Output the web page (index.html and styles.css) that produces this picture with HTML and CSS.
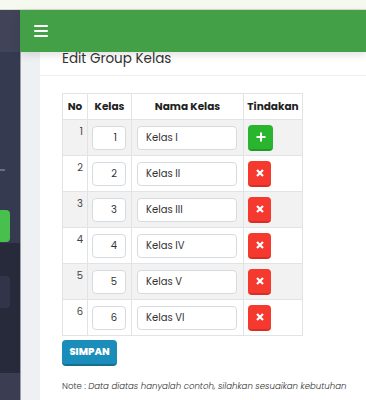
FILE: index.html
```html
<!DOCTYPE html>
<html lang="id">
<head>
    <meta charset="UTF-8">
    <meta name="viewport" content="width=device-width, initial-scale=1.0">
    <title>Edit Group Kelas</title>
    <link rel="stylesheet" href="styles.css">
</head>
<body>
    <div class="top-strip"></div>
    <div class="layout">
        <aside class="sidebar">
            <div class="sidebar-head"></div>
            <div class="sidebar-menu">
                <div class="menu-line"></div>
                <div class="menu-active"></div>
            </div>
            <div class="sidebar-sub">
                <div class="sub-item"></div>
            </div>
            <div class="sidebar-foot"></div>
        </aside>

        <main class="main">
            <header class="navbar">
                <span class="burger">
                    <svg width="14" height="12" viewBox="0 0 14 12">
                        <rect x="0" y="0" width="14" height="2" rx="1" fill="#fff"/>
                        <rect x="0" y="5" width="14" height="2" rx="1" fill="#fff"/>
                        <rect x="0" y="10" width="14" height="2" rx="1" fill="#fff"/>
                    </svg>
                </span>
            </header>

            <div class="content">
                <div class="card">
                    <div class="card-header">Edit Group Kelas</div>
                    <div class="card-body">
                        <table class="kelas-table">
                            <thead>
                                <tr>
                                    <th class="col-no">No</th>
                                    <th class="col-kelas">Kelas</th>
                                    <th class="col-nama">Nama Kelas</th>
                                    <th class="col-aksi">Tindakan</th>
                                </tr>
                            </thead>
                            <tbody>
                                <tr>
                                    <td class="no">1</td>
                                    <td><input class="input-kelas" type="text" value="1"></td>
                                    <td><input class="input-nama" type="text" value="Kelas I"></td>
                                    <td>
                                        <button class="btn btn-add">
                                            <svg width="10" height="10" viewBox="0 0 10 10"><path d="M5 0.5v9M0.5 5h9" stroke="#fff" stroke-width="2"/></svg>
                                        </button>
                                    </td>
                                </tr>
                                <tr>
                                    <td class="no">2</td>
                                    <td><input class="input-kelas" type="text" value="2"></td>
                                    <td><input class="input-nama" type="text" value="Kelas II"></td>
                                    <td><button class="btn btn-del"><svg width="8" height="8" viewBox="0 0 8 8"><path d="M1 1l6 6M7 1l-6 6" stroke="#fff" stroke-width="2.2"/></svg></button></td>
                                </tr>
                                <tr>
                                    <td class="no">3</td>
                                    <td><input class="input-kelas" type="text" value="3"></td>
                                    <td><input class="input-nama" type="text" value="Kelas III"></td>
                                    <td><button class="btn btn-del"><svg width="8" height="8" viewBox="0 0 8 8"><path d="M1 1l6 6M7 1l-6 6" stroke="#fff" stroke-width="2.2"/></svg></button></td>
                                </tr>
                                <tr>
                                    <td class="no">4</td>
                                    <td><input class="input-kelas" type="text" value="4"></td>
                                    <td><input class="input-nama" type="text" value="Kelas IV"></td>
                                    <td><button class="btn btn-del"><svg width="8" height="8" viewBox="0 0 8 8"><path d="M1 1l6 6M7 1l-6 6" stroke="#fff" stroke-width="2.2"/></svg></button></td>
                                </tr>
                                <tr>
                                    <td class="no">5</td>
                                    <td><input class="input-kelas" type="text" value="5"></td>
                                    <td><input class="input-nama" type="text" value="Kelas V"></td>
                                    <td><button class="btn btn-del"><svg width="8" height="8" viewBox="0 0 8 8"><path d="M1 1l6 6M7 1l-6 6" stroke="#fff" stroke-width="2.2"/></svg></button></td>
                                </tr>
                                <tr>
                                    <td class="no">6</td>
                                    <td><input class="input-kelas" type="text" value="6"></td>
                                    <td><input class="input-nama" type="text" value="Kelas VI"></td>
                                    <td><button class="btn btn-del"><svg width="8" height="8" viewBox="0 0 8 8"><path d="M1 1l6 6M7 1l-6 6" stroke="#fff" stroke-width="2.2"/></svg></button></td>
                                </tr>
                            </tbody>
                        </table>

                        <button class="btn-simpan">SIMPAN</button>

                        <p class="note">Note : <em>Data diatas hanyalah contoh, silahkan sesuaikan kebutuhan</em></p>
                    </div>
                </div>
            </div>
        </main>
    </div>
</body>
</html>
```

FILE: styles.css
```css
body {
    font-family: 'Poppins', 'Open Sans', sans-serif;
    margin: 0;
    padding: 0;
    color: #333;
    background: #eef0f3;
    height: 400px;
    overflow: hidden;
}

.top-strip {
    height: 9px;
    background: #f6f9f0;
    border-bottom: 1px solid #d9dcd4;
}

.layout {
    display: flex;
    height: 390px;
}

/* sidebar */

.sidebar {
    width: 20px;
    display: flex;
    flex-direction: column;
    box-shadow: 1px 0 0 #9a9ca6;
}

.sidebar-head {
    height: 42px;
    background: #414459;
}

.sidebar-menu {
    height: 191px;
    background: #363a51;
}

.menu-line {
    margin-top: 117px;
    width: 5px;
    height: 2px;
    background: #6a6d80;
}

.menu-active {
    margin-top: 39px;
    width: 10px;
    height: 32px;
    background: #47c04e;
    border-radius: 0 4px 4px 0;
}

.sidebar-sub {
    height: 130px;
    background: #272a3a;
    padding-top: 33px;
    box-sizing: border-box;
}

.sub-item {
    width: 10px;
    height: 32px;
    background: #32354a;
    border-radius: 0 4px 4px 0;
}

.sidebar-foot {
    flex: 1;
    background: #3b3e52;
}

/* main */

.main {
    flex: 1;
    display: flex;
    flex-direction: column;
}

.navbar {
    height: 42px;
    background: #43a047;
    display: flex;
    align-items: center;
    padding-left: 14px;
    box-shadow: 0 3px 8px rgba(0,0,0,0.12);
    position: relative;
    z-index: 1;
}

.burger {
    display: flex;
}

.content {
    flex: 1;
    padding-left: 20px;
}

.card {
    background: #fff;
    height: 100%;
}

.card-header {
    height: 24px;
    padding-left: 22px;
    font-size: 13.5px;
    line-height: 14px;
    border-bottom: 1px solid #eef0ee;
    box-sizing: border-box;
    color: #333;
}

.card-body {
    padding: 17px 0 0 22px;
}

/* table */

.kelas-table {
    border-collapse: collapse;
    table-layout: fixed;
    width: 241px;
    font-size: 10px;
}

.kelas-table th,
.kelas-table td {
    border: 1px solid #e3e3e3;
}

.kelas-table th {
    height: 25px;
    font-weight: 700;
    font-size: 10.5px;
    text-align: center;
    color: #222;
    padding: 0;
}

.col-no { width: 24px; }
.col-kelas { width: 43px; }
.col-nama { width: 111px; }
.col-aksi { width: 58px; }

.kelas-table tbody tr {
    height: 36px;
}

.kelas-table tbody tr:nth-child(odd) {
    background: #f2f2f2;
}

.kelas-table td {
    padding: 0 4px;
}

.kelas-table td.no {
    vertical-align: top;
    text-align: right;
    padding-top: 4px;
    color: #444;
}

.input-kelas,
.input-nama {
    box-sizing: border-box;
    height: 24px;
    border: 1px solid #d6dbe0;
    border-radius: 4px;
    background: #fff;
    font-family: inherit;
    font-size: 10px;
    color: #333;
    outline: none;
    display: block;
}

.input-kelas {
    width: 34px;
    text-align: right;
    padding: 0 8px 0 4px;
}

.input-nama {
    width: 100px;
    margin-left: 1px;
    padding: 0 8px;
}

.btn {
    border: none;
    border-radius: 4px;
    padding: 0;
    display: flex;
    align-items: center;
    justify-content: center;
    cursor: pointer;
}

.btn-add {
    width: 25px;
    height: 26px;
    background: #2ab52f;
    border-bottom: 2px solid #22982a;
}

.btn-del {
    width: 23px;
    height: 26px;
    background: #f6392f;
    border-bottom: 2px solid #d92e25;
}

.btn-simpan {
    margin-top: 4px;
    width: 55px;
    height: 26px;
    background: #1b8dba;
    border: none;
    border-bottom: 2px solid #146f93;
    border-radius: 4px;
    color: #fff;
    font-family: inherit;
    font-weight: 800;
    font-size: 10px;
    padding: 0;
}

.note {
    margin: 14px 0 0;
    font-size: 8.6px;
    font-weight: 300;
    color: #333;
}
```
